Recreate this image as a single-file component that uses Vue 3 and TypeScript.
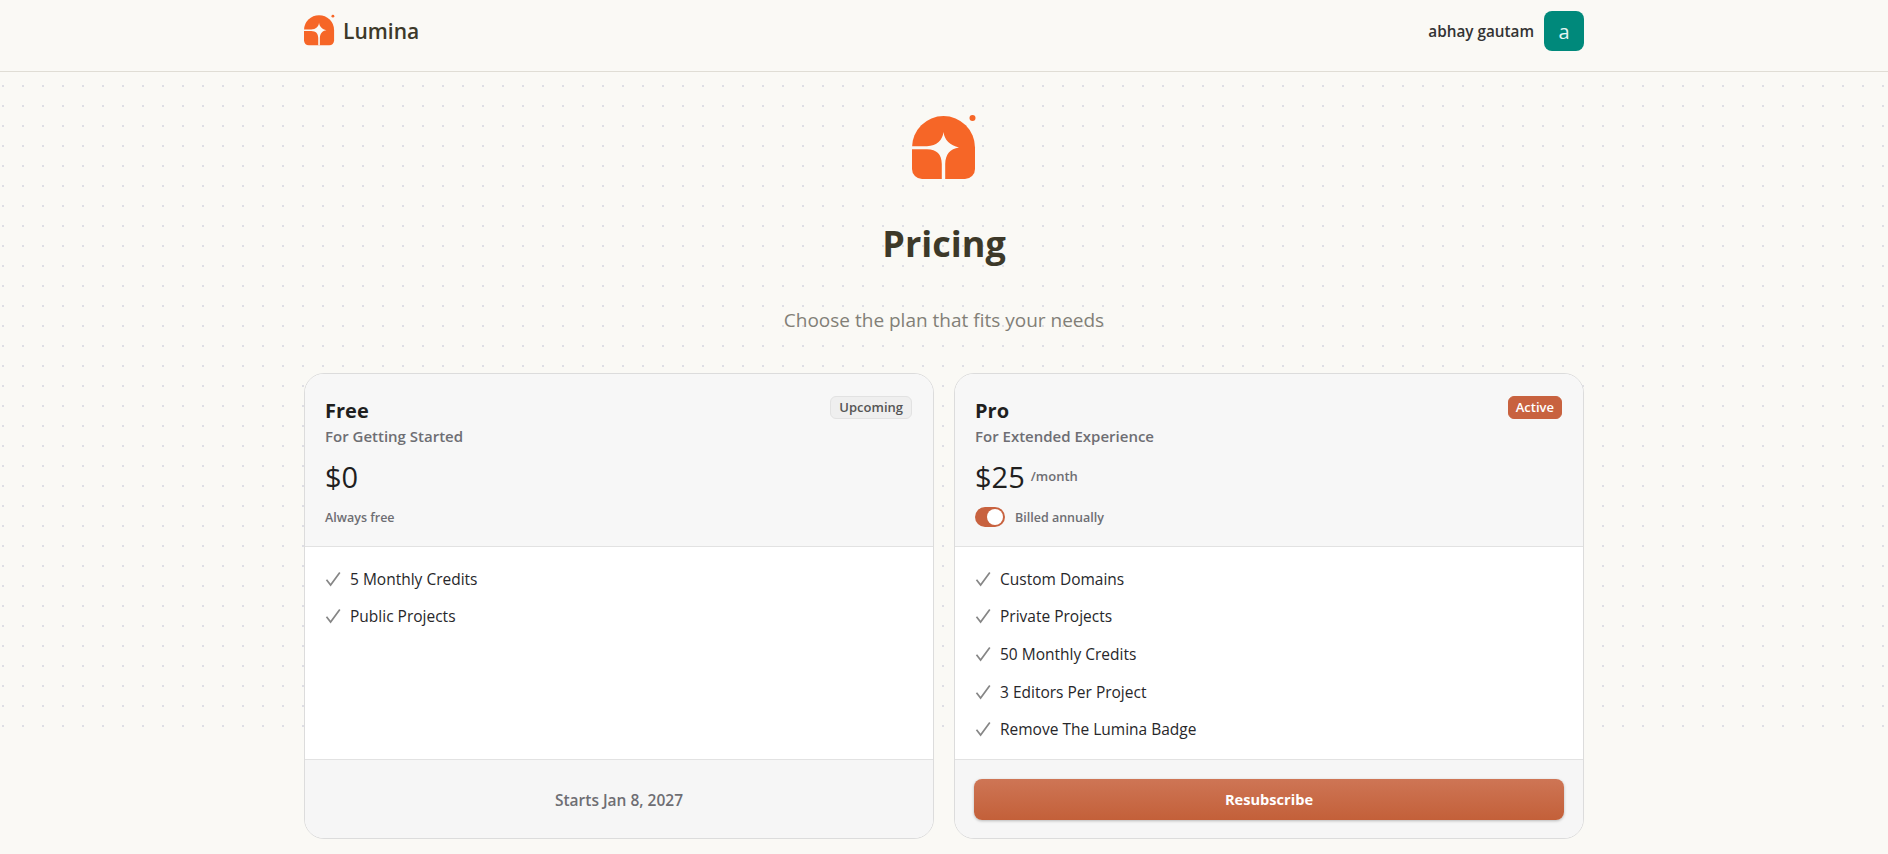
<script setup lang="ts">
interface Plan {
  name: string
  tagline: string
  price: string
  badge: string
  features: string[]
}

const free: Plan = {
  name: 'Free',
  tagline: 'For Getting Started',
  price: '$0',
  badge: 'Upcoming',
  features: ['5 Monthly Credits', 'Public Projects'],
}

const pro: Plan = {
  name: 'Pro',
  tagline: 'For Extended Experience',
  price: '$25',
  badge: 'Active',
  features: [
    'Custom Domains',
    'Private Projects',
    '50 Monthly Credits',
    '3 Editors Per Project',
    'Remove The Lumina Badge',
  ],
}

const plans = [free, pro]
const logoArch = 'M0 33.5A31.5 31.5 0 0 1 63 33.5V55A10 10 0 0 1 53 65H10A10 10 0 0 1 0 55Z'
const logoStar =
  'M31.5 18C32.5 26 38 31.5 47 33.5C38 35 33.6 40 33.2 50V65H29.8V50C29.5 40 25 35.5 15 35.2H0V32.2H15C25 32 30.5 26 31.5 18Z'
</script>

<template>
  <div class="page">
    <header class="topbar">
      <div class="topbar-inner">
        <div class="brand">
          <svg class="logo-small" viewBox="0 0 67 66">
            <path :d="logoArch" fill="#f66627" />
            <path :d="logoStar" fill="#faf9f5" />
            <circle cx="60.5" cy="4" r="3" fill="#f66627" />
          </svg>
          <span class="brand-name">Lumina</span>
        </div>
        <div class="user">
          <span class="user-name">abhay gautam</span>
          <div class="avatar">a</div>
        </div>
      </div>
    </header>

    <main class="content">
      <svg class="logo-big" viewBox="0 0 67 66">
        <path :d="logoArch" fill="#f66627" />
        <path :d="logoStar" fill="#faf9f5" />
        <circle cx="60.5" cy="4" r="3" fill="#f66627" />
      </svg>
      <h1 class="title">Pricing</h1>
      <p class="subtitle">Choose the plan that fits your needs</p>

      <div class="plans">
        <section v-for="plan in plans" :key="plan.name" class="card">
          <div class="card-head">
            <span class="badge" :class="plan.badge === 'Active' ? 'badge-active' : 'badge-muted'">{{ plan.badge }}</span>
            <div class="plan-name">{{ plan.name }}</div>
            <div class="plan-tagline">{{ plan.tagline }}</div>
            <div class="price-row">
              <span class="price">{{ plan.price }}</span>
              <span v-if="plan.name === 'Pro'" class="per">/month</span>
            </div>
            <div v-if="plan.name === 'Pro'" class="billing">
              <span class="toggle"><span class="knob"></span></span>
              <span>Billed annually</span>
            </div>
            <div v-else class="billing">Always free</div>
          </div>

          <ul class="features">
            <li v-for="item in plan.features" :key="item">
              <svg class="check" viewBox="0 0 16 16" fill="none">
                <path d="M1.5 8.8L5.6 14L14.8 1.5" stroke="#868686" stroke-width="1.7" />
              </svg>
              {{ item }}
            </li>
          </ul>

          <div class="card-foot">
            <button v-if="plan.name === 'Pro'" class="resub">Resubscribe</button>
            <span v-else class="starts">Starts Jan 8, 2027</span>
          </div>
        </section>
      </div>
    </main>
  </div>
</template>

<style>
html,
body {
  margin: 0;
  background: #faf9f5;
}
</style>

<style scoped>
.page {
  height: 854px;
  overflow: hidden;
  font-family: "Open Sans", "Noto Sans", sans-serif;
  color: #1f1f1f;
}

.topbar {
  height: 71px;
  border-bottom: 1px solid #e0ddd5;
}

.topbar-inner {
  width: 1280px;
  height: 100%;
  box-sizing: border-box;
  padding-bottom: 9px;
  margin: 0 auto;
  display: flex;
  align-items: center;
  justify-content: space-between;
}

.brand {
  display: flex;
  align-items: center;
  gap: 7px;
}

.logo-small {
  width: 32px;
  height: 32px;
  margin-top: -2px;
}

.brand-name {
  font-size: 21px;
  font-weight: 600;
  color: #3d3929;
}

.user {
  display: flex;
  align-items: center;
  gap: 10px;
}

.user-name {
  font-size: 15.3px;
  font-weight: 600;
  color: #333;
}

.avatar {
  width: 40px;
  height: 40px;
  border-radius: 8px;
  background: #00897b;
  color: #e6f4f1;
  font-size: 20px;
  display: flex;
  align-items: center;
  justify-content: center;
}

.content {
  height: 782px;
  display: flex;
  flex-direction: column;
  align-items: center;
  background-image:
    linear-gradient(transparent 655px, #faf9f5 655px),
    radial-gradient(circle, #dedee4 1px, transparent 1.2px);
  background-size: 100% 100%, 20px 20px;
  background-position: 0 0, -7px 4px;
}

.logo-big {
  width: 67px;
  height: 66px;
  margin: 42px 0 0 3px;
}

.title {
  margin: 40px 0 0;
  font-size: 36px;
  line-height: 48px;
  font-weight: 700;
  color: #3d3929;
}

.subtitle {
  margin: 38px 0 0;
  font-size: 19px;
  line-height: 28px;
  color: #827f77;
}

.plans {
  width: 1280px;
  margin-top: 39px;
  display: grid;
  grid-template-columns: 1fr 1fr;
  gap: 20px;
}

.card {
  height: 466px;
  box-sizing: border-box;
  border: 1px solid #dcdcdc;
  border-radius: 20px;
  background: #fff;
  display: flex;
  flex-direction: column;
  overflow: hidden;
}

.card-head {
  position: relative;
  height: 173px;
  box-sizing: border-box;
  padding: 23px 20px 0;
  background: #f7f7f7;
  border-bottom: 1px solid #e2e2e2;
}

.badge {
  position: absolute;
  top: 22px;
  right: 21px;
  padding: 0 8px;
  height: 23px;
  line-height: 21px;
  box-sizing: border-box;
  border-radius: 6px;
  font-size: 13px;
  font-weight: 600;
}

.badge-muted {
  background: #efefef;
  border: 1px solid #e2e2e2;
  color: #555;
}

.badge-active {
  padding: 0 7px;
  background: #c8623f;
  border: 1px solid #c8623f;
  color: #fff;
}

.plan-name {
  font-size: 20px;
  line-height: 28px;
  font-weight: 700;
  color: #1f1f1f;
}

.plan-tagline {
  font-size: 15px;
  line-height: 23px;
  font-weight: 600;
  color: #6e6e73;
}

.price-row {
  margin-top: 6px;
  height: 44px;
  display: flex;
  align-items: center;
  gap: 6px;
}

.price {
  font-size: 29px;
  font-weight: 500;
  color: #1f1f1f;
}

.per {
  font-size: 13px;
  font-weight: 600;
  color: #6e6e73;
}

.billing {
  margin-top: 7px;
  height: 24px;
  display: flex;
  align-items: center;
  gap: 10px;
  font-size: 12.5px;
  font-weight: 600;
  color: #6e6e73;
}

.toggle {
  position: relative;
  width: 30px;
  height: 20px;
  border-radius: 10px;
  background: #c8623f;
}

.knob {
  position: absolute;
  top: 2px;
  right: 2px;
  width: 16px;
  height: 16px;
  border-radius: 50%;
  background: #fff;
}

.features {
  flex: 1;
  margin: 0;
  padding: 13px 20px 0;
  list-style: none;
}

.features li {
  height: 37.6px;
  display: flex;
  align-items: center;
  gap: 9px;
  font-size: 15.5px;
  color: #27272a;
}

.check {
  width: 16px;
  height: 16px;
  flex: none;
}

.card-foot {
  height: 79px;
  box-sizing: border-box;
  background: #f6f6f6;
  border-top: 1px solid #e2e2e2;
  padding: 18px 19px;
  display: flex;
  align-items: center;
  justify-content: center;
}

.starts {
  margin-top: 1px;
  font-size: 15.5px;
  font-weight: 600;
  color: #6e6e73;
}

.resub {
  width: 100%;
  height: 41px;
  border: none;
  border-radius: 8px;
  background: linear-gradient(#ce7555, #c36039);
  box-shadow: 0 1px 3px rgba(0, 0, 0, 0.25);
  color: #fff;
  font-family: inherit;
  font-size: 14.6px;
  font-weight: 700;
}
</style>
